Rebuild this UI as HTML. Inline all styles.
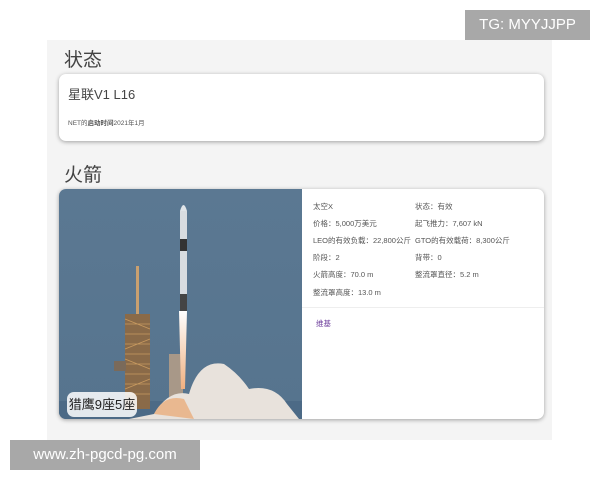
<!DOCTYPE html>
<html><head><meta charset="utf-8"><style>
*{margin:0;padding:0;box-sizing:border-box}
body{width:600px;height:480px;background:#fff;position:relative;overflow:hidden;font-family:"Liberation Sans","Noto Sans CJK SC",sans-serif;color:#333}
.panel{position:absolute;left:47px;top:40px;width:505px;height:400px;background:#f4f4f4}
h2{position:absolute;font-weight:normal;font-size:19px;color:#444;left:64px}
.card{position:absolute;left:59px;width:485px;background:#fff;border-radius:7px;box-shadow:0 1px 4px rgba(0,0,0,.35)}
.tg{position:absolute;left:465px;top:10px;width:125px;height:30px;background:#a8a8a8;color:#fff;font-size:15px;line-height:30px;text-align:center}
.www{position:absolute;left:10px;top:440px;width:190px;height:30px;background:#a8a8a8;color:#fff;font-size:15px;line-height:30px;text-align:center}
.sp{position:absolute;font-size:7.5px;color:#555;white-space:nowrap}
</style></head><body>
<div class="panel"></div>
<div class="tg">TG: MYYJJPP</div>
<h2 style="top:45px">状态</h2>
<div class="card" style="top:74px;height:67px">
<div style="position:absolute;left:9px;top:10px;font-size:13px;color:#444">星联V1 L16</div>
<div style="position:absolute;left:9px;top:43px;font-size:6.5px;color:#555">NET的<b>启动时间</b>2021年1月</div>
</div>
<h2 style="top:160px">火箭</h2>
<div class="card" style="top:189px;height:230px;overflow:hidden">
<svg width="243" height="230" style="position:absolute;left:0;top:0">
<defs><linearGradient id="s" x1="0" y1="0" x2="0" y2="1"><stop offset="0" stop-color="#5b7892"/><stop offset="1" stop-color="#56748e"/></linearGradient>
<linearGradient id="f" x1="0" y1="0" x2="0" y2="1"><stop offset="0" stop-color="#fff"/><stop offset="1" stop-color="#f0b080"/></linearGradient></defs>
<rect width="243" height="230" fill="url(#s)"/>
<rect y="212" width="243" height="18" fill="#4c6a86"/>
<rect x="77" y="77" width="3" height="50" fill="#c9a070"/>
<rect x="66" y="125" width="25" height="95" fill="#8a6a48"/>
<g stroke="#c89a60" stroke-width="0.8"><path d="M66 135h25M66 145h25M66 155h25M66 165h25M66 175h25M66 185h25M66 195h25M66 205h25M66 130l25 10M91 150l-25 10M66 170l25 10M91 190l-25 10"/></g>
<rect x="55" y="172" width="12" height="10" fill="#7a6a5a"/>
<path d="M110 165h14v50h-14z" fill="#a89888"/>
<path d="M95 225 Q110 200 130 205 Q140 170 165 175 Q180 185 190 200 Q215 195 228 215 L240 230 L70 230Z" fill="#e8e2dc"/>
<path d="M95 225 Q105 205 125 210 L135 230Z" fill="#e9b890"/>
<path d="M120 122 L128 122 L126 200 L122 200Z" fill="url(#f)"/>
<rect x="121" y="22" width="7" height="100" fill="#d8dce0"/>
<path d="M121 22 Q124.5 10 128 22Z" fill="#e0e4e8"/>
<rect x="121" y="50" width="7" height="12" fill="#333"/>
<rect x="121" y="105" width="7" height="17" fill="#444"/>
</svg>
<div style="position:absolute;left:8px;top:203px;width:70px;height:25px;background:rgba(255,255,255,.85);border-radius:7px;font-size:13px;line-height:25px;text-align:center;color:#222">猎鹰9座5座</div>
<div class="sp" style="left:254px;top:12px">太空X</div>
<div class="sp" style="left:356px;top:12px">状态：有效</div>
<div class="sp" style="left:254px;top:29px">价格：5,000万美元</div>
<div class="sp" style="left:356px;top:29px">起飞推力：7,607 kN</div>
<div class="sp" style="left:254px;top:46px">LEO的有效负载：22,800公斤</div>
<div class="sp" style="left:356px;top:46px">GTO的有效载荷：8,300公斤</div>
<div class="sp" style="left:254px;top:63px">阶段：2</div>
<div class="sp" style="left:356px;top:63px">背带：0</div>
<div class="sp" style="left:254px;top:80px">火箭高度：70.0 m</div>
<div class="sp" style="left:356px;top:80px">整流罩直径：5.2 m</div>
<div class="sp" style="left:254px;top:98px">整流罩高度：13.0 m</div>
<div style="position:absolute;left:243px;right:0;top:118px;border-top:1px solid #eee"></div>
<div class="sp" style="left:257px;top:129px;color:#6a3a9a">维基</div>
</div>
<div class="www">www.zh-pgcd-pg.com</div>
</body></html>
